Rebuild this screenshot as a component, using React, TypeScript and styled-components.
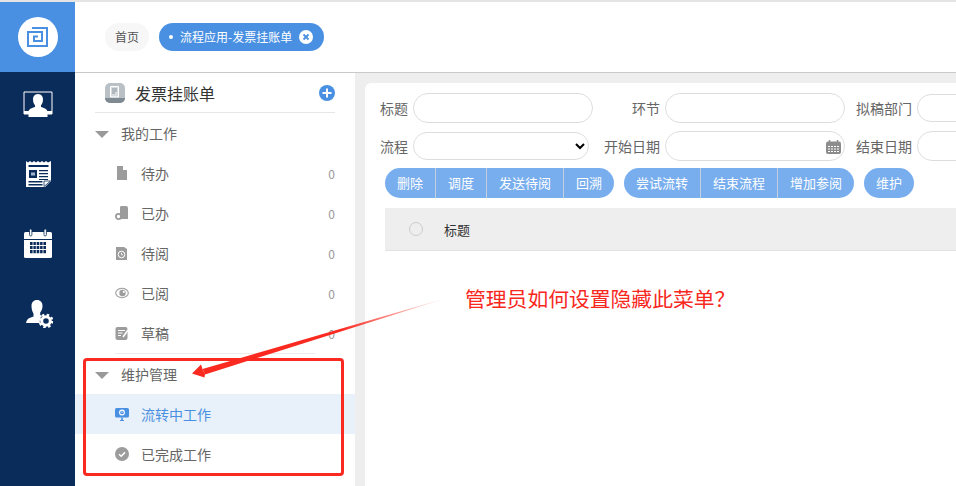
import React from "react";
import styled, { createGlobalStyle } from "styled-components";

const Global = createGlobalStyle`
  html, body { margin: 0; padding: 0; background: #fff; overflow: hidden; }
  * { box-sizing: border-box; }
  body { font-family: "Noto Sans CJK SC", "Liberation Sans", sans-serif; }
`;

const Shell = styled.div`
  position: relative; width: 956px; height: 486px; display: flex; overflow: hidden;
  border-top: 2px solid #e4e4e4; background: #fff;
`;
const Rail = styled.nav`
  width: 75px; flex: none; display: flex; flex-direction: column; background: #0a2c5a;
`;
const LogoBlock = styled.div`
  height: 70px; background: #4a90e2; display: flex; align-items: center; justify-content: center;
`;
const LogoDisc = styled.div`
  width: 40px; height: 40px; border-radius: 50%; background: #fff;
  display: flex; align-items: center; justify-content: center;
`;
const RailList = styled.div`
  display: flex; flex-direction: column; align-items: center; gap: 40px; padding-top: 16px;
`;
const RailIcon = styled.svg`
  width: 30px; height: 30px; display: block;
`;
const Main = styled.div`
  flex: 1; min-width: 0; display: flex; flex-direction: column;
`;
const Header = styled.header`
  height: 71px; flex: none; display: flex; align-items: center; gap: 10px; padding: 0 0 1px 30px;
  border-bottom: 1px solid #c9c9c9;
`;
const HomeTab = styled.div`
  height: 28px; padding: 0 10px; border-radius: 14px; background: #f7f7f7; color: #555;
  font-size: 12px; line-height: 28px;
`;
const ActiveTab = styled.div`
  height: 28px; width: 165px; padding: 0 11px 0 10px; border-radius: 14px; background: #4a90e2; color: #fff;
  font-size: 12px; line-height: 28px; display: flex; align-items: center; white-space: nowrap;
`;
const TabDot = styled.span`
  width: 4px; height: 4px; border-radius: 50%; background: #fff; margin-right: 7px; flex: none;
`;
const TabClose = styled.svg`
  width: 14px; height: 14px; margin-left: auto; flex: none;
`;
const Body = styled.div`
  flex: 1; min-height: 0; display: flex;
`;
const Side = styled.aside`
  width: 280px; flex: none; background: #fff; display: flex; flex-direction: column;
`;
const SideTitle = styled.div`
  height: 40px; margin: 0 20px; padding: 0 0 0 10px; border-bottom: 1px solid #e6e6e6;
  display: flex; align-items: center; gap: 10px; font-size: 16px; color: #333;
`;
const TitleIcon = styled.svg`
  width: 20px; height: 20px; flex: none;
`;
const PlusIcon = styled.svg`
  width: 16px; height: 16px; margin-left: auto; flex: none;
`;
const GroupHead = styled.div`
  height: 40px; display: flex; align-items: center; padding-left: 20px; font-size: 14px; color: #666;
`;
const Caret = styled.span`
  width: 0; height: 0; border-left: 7px solid transparent; border-right: 7px solid transparent;
  border-top: 7px solid #999; margin-right: 12px; margin-top: 3px;
`;
const MenuItem = styled.div<{ $active?: boolean }>`
  height: 40px; display: flex; align-items: center; padding: 0 20px 0 40px; font-size: 14px;
  color: ${(p) => (p.$active ? "#4a90e2" : "#666")};
  background: ${(p) => (p.$active ? "#e8f0f9" : "transparent")};
`;
const MenuIcon = styled.svg`
  width: 14px; height: 14px; margin-right: 12px; flex: none;
`;
const Count = styled.span`
  margin-left: auto; font-size: 12px; color: #999;
`;
const SideRule = styled.div`
  height: 1px; margin: 0 40px; background: #ececec; flex: none;
`;
const Workspace = styled.main`
  flex: 1; min-width: 0; background: #eee; padding: 10px 0 0 10px;
`;
const Panel = styled.section`
  height: 100%; background: #fff; border-top-left-radius: 6px; padding: 10px 0 0 15px; overflow: hidden;
  display: flex; flex-direction: column;
`;
const FormRow = styled.div`
  display: flex; align-items: center; gap: 11px; height: 30px; flex: none; margin-bottom: 8px;
`;
const Field = styled.label`
  display: flex; align-items: center; gap: 5px; flex: none; font-size: 14px; color: #666;
  position: relative; width: ${(p: { $w: number }) => p.$w}px;
`;
const FieldName = styled.span<{ $w: number }>`
  width: ${(p) => p.$w}px; text-align: right; flex: none; white-space: nowrap;
`;
const TextBox = styled.input<{ $h?: number }>`
  width: 180px; height: ${(p) => p.$h ?? 30}px; flex: none; border: 1px solid #ddd; border-radius: 15px;
  background: #fff; padding: 0 10px; outline: none;
`;
const SelectBox = styled.select`
  width: 176px; height: 28px; flex: none; border: 1px solid #ddd; border-radius: 14px; background: #fff;
  margin-right: 4px; font-size: 14px;
`;
const CalIcon = styled.svg`
  position: absolute; right: 4px; top: 9px; width: 15px; height: 14px;
`;
const Toolbar = styled.div`
  display: flex; gap: 10px; margin: -1px 0 10px 5px; flex: none;
`;
const BtnGroup = styled.div`
  display: flex; height: 30px; border-radius: 15px; overflow: hidden; background: #78aeee;
`;
const Btn = styled.button`
  height: 30px; border: 0; padding: 0 12px; margin: 0; background: transparent; color: #fff; font: inherit;
  font-size: 13px; line-height: 30px; white-space: nowrap; border-right: 1px solid #c4d0dd;
  &:last-child { border-right: 0; }
`;
const TableHead = styled.div`
  height: 43px; margin-left: 5px; flex: none; background: #eee; border-bottom: 1px solid #e2e2e2;
  display: flex; align-items: center; padding-left: 24px; font-size: 13px; color: #333;
`;
const Radio = styled.span`
  width: 14px; height: 14px; border-radius: 50%; border: 1px solid #ccc; margin-right: 21px; flex: none;
`;
const Highlight = styled.div`
  position: absolute; left: 83px; top: 356px; width: 261px; height: 118px;
  border: 3px solid #fa2a20; border-radius: 4px; pointer-events: none;
`;
const Note = styled.div`
  position: absolute; left: 465px; top: 281px; font-size: 20.8px; line-height: 30px; color: #f8281e; white-space: nowrap;
`;
const ArrowLayer = styled.svg`
  position: absolute; left: 0; top: -2px; width: 956px; height: 486px; pointer-events: none;
`;

const menuGlyphs: Record<string, React.ReactNode> = {
  todo: <path d="M2 0h6l4 4v10H2zM8 0v4h4" fill="#9c9c9c" />,
  done: <><path d="M5 1q0-1 2-1h4q2 0 2 2v11H5z" fill="#9c9c9c" /><circle cx="3.5" cy="10.5" r="2.6" fill="none" stroke="#9c9c9c" strokeWidth="1.8" /></>,
  wait: <><path d="M1 1h8l3 2v11H1z" fill="#9c9c9c" /><circle cx="6.5" cy="8.5" r="3.3" fill="none" stroke="#fff" strokeWidth="1" /><path d="M6.5 6.8v2h1.5" stroke="#fff" strokeWidth=".8" fill="none" /></>,
  read: <><ellipse cx="7" cy="7" rx="6.3" ry="4.6" fill="none" stroke="#a6a6a6" strokeWidth="1.2" /><circle cx="7.5" cy="7" r="3.2" fill="#9c9c9c" /><circle cx="8.8" cy="5.8" r="1.1" fill="#fff" /></>,
  draft: <><rect x="0.5" y="1" width="12" height="13" rx="2" fill="#9c9c9c" /><path d="M3 4.5h7M3 7h4.5M3 9.5h3" stroke="#fff" strokeWidth="1" /><path d="M8 11l5-7" stroke="#fff" strokeWidth="1.6" /></>,
  flow: <><rect x="0" y="1" width="14" height="9.5" rx="1.5" fill="#4a90e2" /><path d="M5 13h4v1H5zM6.2 10.5h1.6V13H6.2z" fill="#4a90e2" /><circle cx="7" cy="5.5" r="2.4" fill="none" stroke="#fff" strokeWidth="1.1" /><path d="M7 4.4v1.4" stroke="#fff" strokeWidth=".9" /></>,
  finish: <><circle cx="7" cy="7" r="7" fill="#9c9c9c" /><path d="M4 7.2l2.2 2 3.8-3.8" stroke="#fff" strokeWidth="1.5" fill="none" /></>,
};

const Item = ({ g, t, c, active }: { g: string; t: string; c?: string; active?: boolean }) => (
  <MenuItem $active={active}>
    <MenuIcon viewBox="0 0 14 14">{menuGlyphs[g]}</MenuIcon>
    {t}
    {c && <Count>{c}</Count>}
  </MenuItem>
);

export default function App() {
  return (
    <>
      <Global />
      <Shell>
        <Rail>
          <LogoBlock>
            <LogoDisc>
              <svg width="21" height="20" viewBox="0 0 21 20" fill="none" stroke="#4a90e2" strokeWidth="2">
                <path d="M5 1H20V19H1V5H15V14H7V9.500H11" />
              </svg>
            </LogoDisc>
          </LogoBlock>
          <RailList>
            <RailIcon viewBox="0 0 30 30">
              <path d="M1 4h28v22H1z" fill="#0a2c5a" stroke="#fff" strokeWidth="1" />
              <path d="M1 23h28v3H1z" fill="#fff" />
              <path d="M15 6c3.500 0 5 2.800 5 5.500 0 2.600-1 4.500-2 5.800v1.700c3 1 6 1.800 6.500 4.500V29h-19v-5.500c.5-2.700 3.500-3.500 6.500-4.500v-1.700c-1-1.300-2-3.200-2-5.800C10 8.800 11.500 6 15 6z" fill="#fff" />
              <circle cx="25" cy="21" r="1" fill="#0a2c5a" />
            </RailIcon>
            <RailIcon viewBox="0 0 30 30">
              <path d="M3 3l2 1.500L7 3l2 1.500L11 3l2 1.500L15 3l2 1.500L19 3l2 1.500L23 3l2 1.500L28 3v20l-6 6H3z" fill="#fff" />
              <path d="M5.500 7h20v2h-20zM5.500 23h14v1.500h-14zM5.500 26h14v1.500h-14zM16 12h9v1.300h-9zM16 15h9v1.300h-9zM16 18h9v1.300h-9zM16 21h9v.900h-9z" fill="#0a2c5a" />
              <rect x="6" y="12" width="8" height="8" fill="#0a2c5a" />
              <rect x="8" y="14.500" width="4" height="3" fill="#9fb3cc" />
              <path d="M21 28.500V23h6.500z" fill="#fff" stroke="#0a2c5a" strokeWidth=".8" />
            </RailIcon>
            <RailIcon viewBox="0 0 30 30">
              <rect x="1" y="4" width="28" height="26" rx="1.500" fill="#fff" />
              <path d="M1 11h28v1H1z" fill="#0a2c5a" />
              <rect x="6.500" y="1" width="2.400" height="7" rx="1.200" fill="#fff" stroke="#0a2c5a" strokeWidth=".8" />
              <rect x="21" y="1" width="2.400" height="7" rx="1.200" fill="#fff" stroke="#0a2c5a" strokeWidth=".8" />
              <path d="M7 14h16v3.100H7zM7 18h16v3.100H7zM7 22h16v3.200H7z" fill="#0a2c5a" />
              <path d="M10 14v12M13.300 14v12M16.600 14v12M20 14v12" stroke="#fff" strokeWidth=".8" />
            </RailIcon>
            <RailIcon viewBox="0 0 30 30">
              <path d="M12 1c3.500 0 5.500 2.500 5.500 6 0 2.800-1 5-2.300 6.500v2.500l2 1c-2.200 1.500-3 4-2.200 7H1c.5-2.500 1.500-4 3.500-5l4-1.500v-3C7.300 13 6.500 10 6.500 7c0-3.500 2-6 5.500-6z" fill="#fff" transform="translate(2 1)" />
              <circle cx="23" cy="23" r="4.300" fill="none" stroke="#fff" strokeWidth="3" />
              <circle cx="23" cy="23" r="6.200" fill="none" stroke="#fff" strokeWidth="2.400" strokeDasharray="2.400 2.470" />
            </RailIcon>
          </RailList>
        </Rail>
        <Main>
          <Header>
            <HomeTab>首页</HomeTab>
            <ActiveTab>
              <TabDot />
              流程应用-发票挂账单
              <TabClose viewBox="0 0 14 14">
                <circle cx="7" cy="7" r="7" fill="#fff" />
                <path d="M4.500 4.500l5 5M9.500 4.500l-5 5" stroke="#4a90e2" strokeWidth="1.800" />
              </TabClose>
            </ActiveTab>
          </Header>
          <Body>
            <Side>
              <SideTitle>
                <TitleIcon viewBox="0 0 20 20">
                  <rect width="20" height="20" rx="5" fill="#b9c0c6" />
                  <path d="M0 15h20v0a5 5 0 0 1-5 5H5a5 5 0 0 1-5-5z" fill="#7f8a93" />
                  <path d="M5.500 3.500h8V14h-8z" fill="#d7dbde" stroke="#fff" strokeWidth="1" />
                  <path d="M7 6h5M7 8h5M7 10h3" stroke="#8b959d" strokeWidth="1" />
                </TitleIcon>
                发票挂账单
                <PlusIcon viewBox="0 0 16 16">
                  <circle cx="8" cy="8" r="8" fill="#4a90e2" />
                  <path d="M8 3.500v9M3.500 8h9" stroke="#fff" strokeWidth="2" />
                </PlusIcon>
              </SideTitle>
              <GroupHead><Caret />我的工作</GroupHead>
              <Item g="todo" t="待办" c="0" />
              <Item g="done" t="已办" c="0" />
              <Item g="wait" t="待阅" c="0" />
              <Item g="read" t="已阅" c="0" />
              <Item g="draft" t="草稿" c="0" />
              <SideRule />
              <GroupHead><Caret />维护管理</GroupHead>
              <Item g="flow" t="流转中工作" active />
              <Item g="finish" t="已完成工作" />
            </Side>
            <Workspace>
              <Panel>
                <FormRow>
                  <Field $w={213}><FieldName $w={28}>标题</FieldName><TextBox /></Field>
                  <Field $w={241}><FieldName $w={56}>环节</FieldName><TextBox /></Field>
                  <Field $w={241}><FieldName $w={56}>拟稿部门</FieldName><TextBox $h={28} /></Field>
                </FormRow>
                <FormRow>
                  <Field $w={213}>
                    <FieldName $w={28}>流程</FieldName>
                    <SelectBox><option></option></SelectBox>
                  </Field>
                  <Field $w={241}>
                    <FieldName $w={56}>开始日期</FieldName>
                    <TextBox />
                    <CalIcon viewBox="0 0 15 14">
                      <rect y="1.500" width="15" height="12.500" rx="2" fill="#8c8c8c" />
                      <path d="M3.500 0v3M11.500 0v3" stroke="#8c8c8c" strokeWidth="1.500" />
                      <path d="M2 6.500h11M2 9h11M2 11.500h11" stroke="#fff" strokeWidth="1" strokeDasharray="2 1" />
                    </CalIcon>
                  </Field>
                  <Field $w={241}><FieldName $w={56}>结束日期</FieldName><TextBox /></Field>
                </FormRow>
                <Toolbar>
                  <BtnGroup><Btn>删除</Btn><Btn>调度</Btn><Btn>发送待阅</Btn><Btn>回溯</Btn></BtnGroup>
                  <BtnGroup><Btn>尝试流转</Btn><Btn>结束流程</Btn><Btn>增加参阅</Btn></BtnGroup>
                  <BtnGroup><Btn>维护</Btn></BtnGroup>
                </Toolbar>
                <TableHead><Radio />标题</TableHead>
              </Panel>
            </Workspace>
          </Body>
        </Main>
        <Highlight />
        <Note>管理员如何设置隐藏此菜单？</Note>
        <ArrowLayer viewBox="0 0 956 486">
          <defs>
            <linearGradient id="tail" gradientUnits="userSpaceOnUse" x1="450" y1="297" x2="340" y2="330">
              <stop offset="0" stopColor="#fa2a20" stopOpacity="0" />
              <stop offset="1" stopColor="#fa2a20" />
            </linearGradient>
          </defs>
          <path d="M450 297L205 374.500L202.500 369z" fill="url(#tail)" />
          <path d="M192 373.500L201 364.500L203 370.500L205 374L204.500 377.500z" fill="#fa2a20" />
        </ArrowLayer>
      </Shell>
    </>
  );
}
